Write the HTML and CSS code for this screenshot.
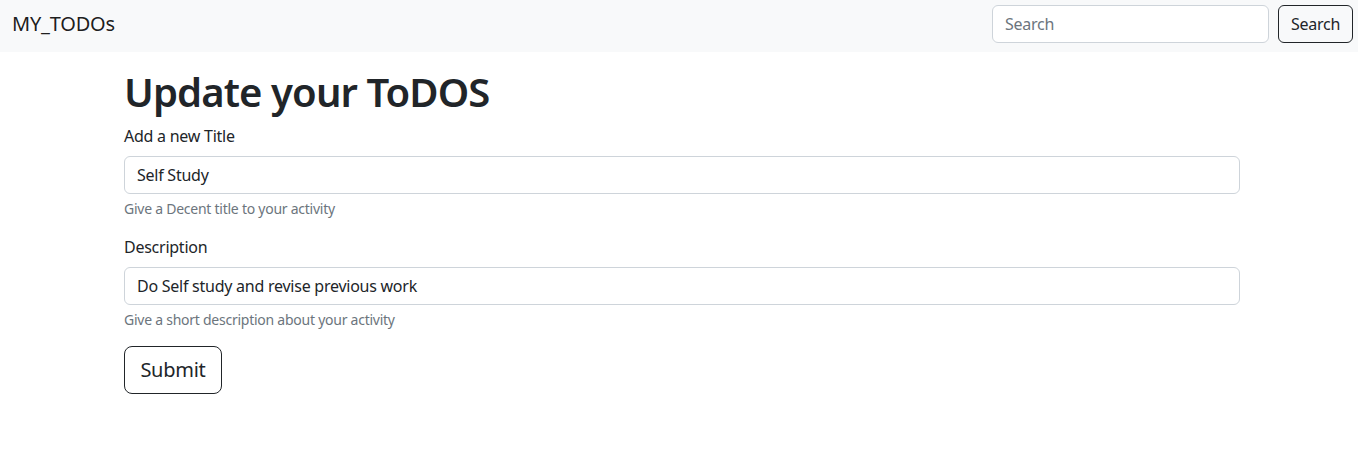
FILE: index.html
```html
<!DOCTYPE html>
<html lang="en">
<head>
<meta charset="utf-8">
<title>MY_TODOs</title>
<link rel="stylesheet" href="styles.css">
</head>
<body>
<nav class="navbar">
  <a class="brand" href="#">MY_TODOs</a>
  <form class="search">
    <input class="search-input" type="search" placeholder="Search">
    <button class="btn btn-outline btn-search" type="button">Search</button>
  </form>
</nav>
<main class="container">
  <h1 class="title">Update your ToDOS</h1>
  <form class="todo-form">
    <div class="field">
      <label class="label" for="title">Add a new Title</label>
      <input class="control" id="title" type="text" value="Self Study">
      <div class="help">Give a Decent title to your activity</div>
    </div>
    <div class="field">
      <label class="label" for="desc">Description</label>
      <input class="control" id="desc" type="text" value="Do Self study and revise previous work">
      <div class="help">Give a short description about your activity</div>
    </div>
    <button class="btn btn-outline btn-lg" type="button">Submit</button>
  </form>
</main>
</body>
</html>
```
FILE: styles.css
```css
* { box-sizing: border-box; }
html, body { margin: 0; padding: 0; }
body {
  font-family: "Noto Sans", "DejaVu Sans", sans-serif;
  font-size: 16px;
  line-height: 1.5;
  letter-spacing: -0.25px;
  color: #212529;
  background: #fff;
}
.navbar {
  display: flex;
  align-items: flex-start;
  justify-content: space-between;
  height: 52px;
  padding: 5px 5px 0 12px;
  background: #f8f9fa;
}
.brand {
  font-size: 20px;
  color: rgba(0,0,0,0.9);
  text-decoration: none;
  line-height: 30px;
  margin-top: 4px;
  letter-spacing: -0.2px;
}
.search { display: flex; gap: 9px; margin: 0; }
.search-input {
  width: 277px;
  height: 38px;
  padding: 6px 12px;
  font: inherit;
  letter-spacing: inherit;
  color: #212529;
  border: 1px solid #ced4da;
  border-radius: 6px;
  background: #fff;
}
.search-input::placeholder { color: #6c757d; }
.btn {
  font: inherit;
  letter-spacing: inherit;
  height: 38px;
  padding: 6px 12px;
  border-radius: 6px;
  background: transparent;
  color: #212529;
  border: 1px solid #212529;
  cursor: pointer;
}
.btn-search { width: 75px; padding: 6px 0; }
.btn-lg {
  width: 98px;
  height: 48px;
  font-size: 20px;
  padding: 8px 0;
  border-radius: 8px;
}
.container {
  width: 1116px;
  margin: 0 0 0 124px;
  padding-top: 16px;
}
.title {
  margin: 0 0 8px;
  font-size: 40px;
  font-weight: 600;
  line-height: 1.2;
  letter-spacing: -0.9px;
}
.todo-form { margin: 0; }
.field { margin-bottom: 16px; }
.label { display: block; margin-bottom: 8px; }
.control {
  display: block;
  width: 100%;
  height: 38px;
  padding: 6px 12px;
  font: inherit;
  letter-spacing: inherit;
  color: #212529;
  border: 1px solid #ced4da;
  border-radius: 6px;
  background: #fff;
}
.help {
  margin-top: 4px;
  font-size: 14px;
  color: #6c757d;
}
```
